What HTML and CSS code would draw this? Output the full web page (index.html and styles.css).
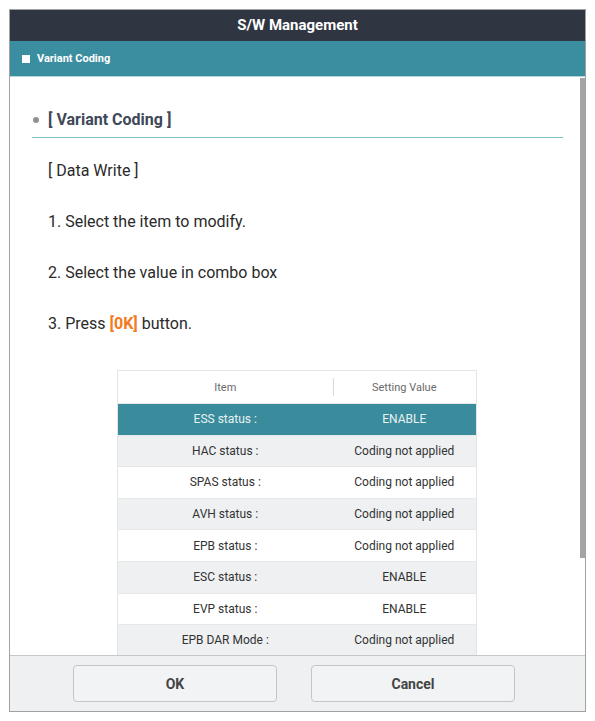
FILE: index.html
```html
<!DOCTYPE html>
<html>
<head>
<meta charset="utf-8">
<link rel="stylesheet" href="styles.css">
</head>
<body>
<div class="dialog">
  <div class="titlebar">S/W Management</div>
  <div class="subbar"><span class="sq"></span>Variant Coding</div>
  <div class="body">
    <div class="main">
      <div class="heading"><span class="dot"></span>[ Variant Coding ]</div>
      <p class="step first">[ Data Write ]</p>
      <p class="step">1. Select the item to modify.</p>
      <p class="step">2. Select the value in combo box</p>
      <p class="step">3. Press <span class="ok">[0K]</span> button.</p>
      <table class="grid">
        <thead>
          <tr><th class="c1">Item</th><th class="c2">Setting Value</th></tr>
        </thead>
        <tbody>
          <tr class="sel"><td>ESS status :</td><td>ENABLE</td></tr>
          <tr class="alt"><td>HAC status :</td><td>Coding not applied</td></tr>
          <tr><td>SPAS status :</td><td>Coding not applied</td></tr>
          <tr class="alt"><td>AVH status :</td><td>Coding not applied</td></tr>
          <tr><td>EPB status :</td><td>Coding not applied</td></tr>
          <tr class="alt"><td>ESC status :</td><td>ENABLE</td></tr>
          <tr><td>EVP status :</td><td>ENABLE</td></tr>
          <tr class="alt"><td>EPB DAR Mode :</td><td>Coding not applied</td></tr>
        </tbody>
      </table>
    </div>
    <div class="track"><div class="thumb"></div></div>
  </div>
  <div class="footer">
    <button class="btn">OK</button>
    <button class="btn">Cancel</button>
  </div>
</div>
</body>
</html>
```
FILE: styles.css
```css
* { box-sizing: border-box; }
html, body { margin: 0; padding: 0; background: #ffffff; }
body { font-family: Roboto, "Liberation Sans", sans-serif; }

.dialog {
  margin: 9px 0 0 9px;
  width: 577px;
  height: 703px;
  border: 1px solid #a2a2a2;
  display: flex;
  flex-direction: column;
  background: #ffffff;
}

.titlebar {
  height: 31px;
  flex: none;
  background: #2f3541;
  color: #ffffff;
  font-weight: 700;
  font-size: 15px;
  line-height: 31px;
  text-align: center;
}

.subbar {
  height: 36px;
  flex: none;
  background: #3a8e9f;
  border-bottom: 1px solid #b3d6dd;
  color: #ffffff;
  font-weight: 700;
  font-size: 11px;
  display: flex;
  align-items: center;
  padding-left: 12px;
}
.sq {
  width: 8px;
  height: 8px;
  background: #ffffff;
  margin-right: 7px;
}

.body {
  flex: 1;
  display: flex;
  overflow: hidden;
  min-height: 0;
}
.main {
  flex: 1;
  padding-top: 32px;
  overflow: hidden;
}
.track {
  width: 5px;
  flex: none;
  padding-top: 1px;
}
.thumb {
  height: 480px;
  background: #a4a4a4;
}

.heading {
  margin: 0 17px 0 22px;
  padding: 0 0 6px 1px;
  border-bottom: 1px solid #7dbfcb;
  display: flex;
  align-items: center;
  font-weight: 700;
  font-size: 16px;
  line-height: 22px;
  color: #3e4858;
  white-space: pre;
}
.dot {
  width: 6px;
  height: 6px;
  border-radius: 50%;
  background: #8e9297;
  margin-right: 9px;
}

.step {
  margin: 31px 0 0 38px;
  font-size: 16px;
  line-height: 20px;
  color: #2a2a2a;
}
.step.first { margin-top: 23px; }
.ok { color: #f27a1f; font-weight: 700; }

.grid {
  margin: 36px 0 0 107px;
  width: 360px;
  border-collapse: collapse;
  table-layout: fixed;
  border: 1px solid #e3e4e6;
}
.grid th {
  height: 33px;
  font-size: 11px;
  font-weight: 400;
  color: #6a6a6a;
  text-align: center;
  padding: 0;
  background: #ffffff;
}
.grid th.c1 { width: 215px; }
.grid th.c2 { position: relative; }
.grid th.c2::before {
  content: "";
  position: absolute;
  left: 0;
  top: 7px;
  height: 18px;
  border-left: 1px solid #d8d9db;
}
.grid td {
  height: 31.6px;
  padding: 0;
  text-align: center;
  font-size: 12px;
  color: #333333;
  border-top: 1px solid #e6e8ea;
}
.grid tr.alt td { background: #eef0f2; }
.grid tr.sel td {
  background: #3a8c9c;
  color: #e8f1f3;
}

.footer {
  height: 56px;
  flex: none;
  background: #eff0f2;
  border-top: 1px solid #c6c7c9;
  display: flex;
  align-items: flex-start;
  padding: 9px 0 0 63px;
  gap: 34px;
}
.btn {
  width: 204px;
  height: 37px;
  background: #f2f3f5;
  border: 1px solid #c3c5c9;
  border-radius: 4px;
  font-family: Roboto, "Liberation Sans", sans-serif;
  font-weight: 700;
  font-size: 14px;
  color: #444444;
  padding: 0;
}
```
